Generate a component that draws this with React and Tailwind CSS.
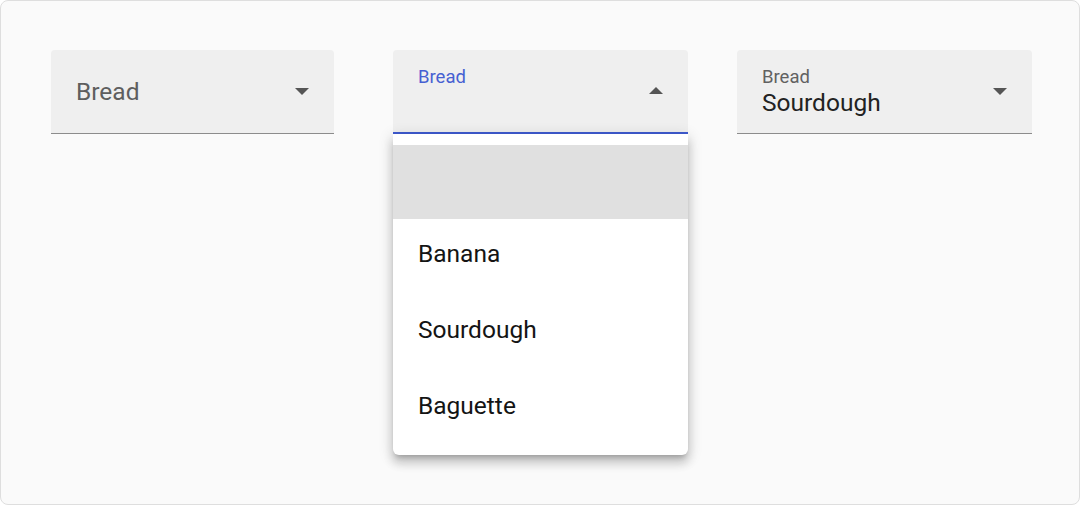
const breads = ["Banana", "Sourdough", "Baguette"];

function Arrow({ up = false }) {
  return (
    <svg width="14" height="7" viewBox="0 0 14 7" className="shrink-0">
      <polygon points={up ? "0,7 14,7 7,0" : "0,0 14,0 7,7"} fill="#555555" />
    </svg>
  );
}

function EmptySelect() {
  return (
    <div className="w-[283px] h-[84px] box-border flex items-center justify-between pl-[25px] pr-[25px] bg-[#efefef] rounded-t-[4px] border-b border-[#8c8c8c]">
      <span className="text-[24.5px] leading-[28px] text-[#5e5e5e]">Bread</span>
      <Arrow />
    </div>
  );
}

function OpenSelect() {
  return (
    <div className="relative w-[295px] ml-[59px]">
      <div className="h-[84px] box-border flex justify-between pl-[25px] pr-[25px] bg-[#efefef] rounded-t-[4px] border-b-2 border-[#3f5bd0]">
        <span className="pt-[17px] text-[18.5px] leading-[20px] text-[#4660d2]">Bread</span>
        <div className="flex items-center pb-[2px]">
          <Arrow up />
        </div>
      </div>
      <div className="absolute left-0 top-[84px] w-full bg-white rounded-b-[6px] pt-[11px] pb-[8px] shadow-[0_5px_5px_-3px_rgba(0,0,0,0.2),0_8px_10px_1px_rgba(0,0,0,0.14),0_3px_14px_2px_rgba(0,0,0,0.12)]">
        <div className="h-[74px] bg-[#e0e0e0]" />
        {breads.map((b) => (
          <div key={b} className="h-[76px] flex items-center pl-[25px] pb-[6px] text-[24.5px] leading-[28px] text-[#141414]">
            {b}
          </div>
        ))}
      </div>
    </div>
  );
}

function FilledSelect() {
  return (
    <div className="w-[295px] ml-[49px] h-[84px] box-border flex justify-between pl-[25px] pr-[25px] bg-[#efefef] rounded-t-[4px] border-b border-[#8c8c8c]">
      <div className="flex flex-col pt-[17px]">
        <span className="text-[18.5px] leading-[20px] text-[#616161]">Bread</span>
        <span className="mt-[2px] text-[24.5px] leading-[28px] text-[#222222]">Sourdough</span>
      </div>
      <div className="flex items-center pb-[1px]">
        <Arrow />
      </div>
    </div>
  );
}

export default function App() {
  return (
    <div className="w-[1080px] h-[505px] box-border rounded-[8px] border border-[#dedede] bg-[#fafafa] pt-[49px] pl-[50px] font-['Roboto',sans-serif]">
      <div className="flex items-start">
        <EmptySelect />
        <OpenSelect />
        <FilledSelect />
      </div>
    </div>
  );
}
